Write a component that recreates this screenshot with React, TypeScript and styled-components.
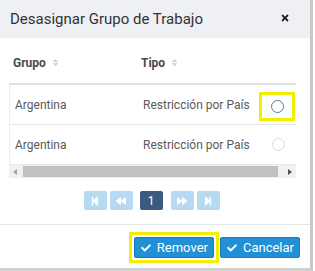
import styled, { createGlobalStyle } from 'styled-components';
import {
    FaTimes,
    FaSort,
    FaCheck,
    FaStepBackward,
    FaBackward,
    FaForward,
    FaStepForward,
} from 'react-icons/fa';

const GlobalStyle = createGlobalStyle`
    body {
        margin: 0;
        background: #ffffff;
        font-family: Roboto, 'Liberation Sans', sans-serif;
        color: #333;
    }
`;

const Modal = styled.div`
    width: 310px;
    height: 268px;
    border-right: 3px solid #c9c9c9;
    border-bottom: 3px solid #d0d0d0;
    background: #fff;
    display: flex;
    flex-direction: column;
`;

const Header = styled.div`
    height: 38px;
    background: #eef0f3;
    display: flex;
    align-items: center;
    justify-content: space-between;
    padding: 0 20px 0 10px;
`;

const Title = styled.h4`
    margin: 0;
    font-size: 15px;
    font-weight: 400;
    color: #333;
`;

const Close = styled.span`
    display: flex;
    color: #1a1a1a;
    margin-top: -3px;
`;

const Body = styled.div`
    padding: 8px 14px 0 9px;
`;

const Row = styled.div<{ $head?: boolean }>`
    display: grid;
    grid-template-columns: 128px 121px 38px;
    height: ${(p) => (p.$head ? '37px' : '39px')};
    align-items: center;
    border-bottom: ${(p) => (p.$head ? '2px solid #e2e2e2' : '1px solid #e8e8e8')};
    border-left: ${(p) => (p.$head ? 'none' : '1px solid #ececec')};
    font-size: 12px;
    color: #5a5a5a;
`;

const HeadCell = styled.div`
    font-weight: 700;
    color: #4a4a4a;
    display: flex;
    align-items: center;
    gap: 5px;
    padding-left: 4px;
    padding-bottom: 4px;
`;

const Cell = styled.div`
    padding-left: 5px;
`;

const RadioCell = styled.div`
    display: flex;
    justify-content: center;
    align-items: center;
`;

const Highlight = styled.span`
    display: inline-flex;
    align-items: center;
    justify-content: center;
    border: 3px solid #f3ef00;
    padding: 2px;
    box-sizing: border-box;
`;

const RadioBox = styled(Highlight)`
    width: 37px;
    height: 29px;
    padding: 0;
    margin-top: 3px;
    margin-right: 2px;
`;

const Radio = styled.span<{ $active?: boolean }>`
    width: 11px;
    height: 11px;
    border-radius: 50%;
    border: 1.5px solid ${(p) => (p.$active ? '#4a7fae' : '#dcdcdc')};
    margin-left: ${(p) => (p.$active ? '0' : '1px')};
`;

const Scrollbar = styled.div`
    height: 13px;
    background: #f1f1f1;
    display: flex;
    align-items: center;
    padding: 0 4px;
    gap: 6px;
`;

const Arrow = styled.span<{ $right?: boolean }>`
    width: 0;
    height: 0;
    border-top: 3px solid transparent;
    border-bottom: 3px solid transparent;
    ${(p) =>
        p.$right
            ? 'border-left: 4px solid #505050;'
            : 'border-right: 4px solid #a3a3a3;'}
`;

const Thumb = styled.div`
    flex: 1;
    height: 11px;
    background: #c1c1c1;
    margin-right: 4px;
`;

const Pager = styled.div`
    display: flex;
    justify-content: center;
    align-items: center;
    margin-top: 13px;
    margin-right: 2px;
`;

const PageBtn = styled.span<{ $active?: boolean; $gap?: number }>`
    width: 23px;
    height: 19px;
    border-radius: 2px;
    display: flex;
    align-items: center;
    justify-content: center;
    background: ${(p) => (p.$active ? '#3b5a80' : '#b6daf2')};
    color: #fff;
    font-size: 12px;
    margin-left: ${(p) => p.$gap ?? 3}px;
`;

const Footer = styled.div`
    margin-top: 14px;
    border-top: 1px solid #e5e5e5;
    display: flex;
    justify-content: flex-end;
    align-items: center;
    padding: 7px 10px 0 0;
    gap: 1px;
`;

const Button = styled.button`
    height: 21px;
    border: 1px solid #1b7cbc;
    border-radius: 2px;
    background: #2190d4;
    color: #fff;
    font-family: Roboto, 'Liberation Sans', sans-serif;
    font-size: 13px;
    display: flex;
    align-items: center;
    gap: 6px;
    padding: 0 5px 0 6px;
    box-sizing: border-box;
`;

export default function App() {
    const rows = ['Argentina', 'Argentina'];
    return (
        <Modal>
            <GlobalStyle />
            <Header>
                <Title>Desasignar Grupo de Trabajo</Title>
                <Close>
                    <FaTimes size={10} />
                </Close>
            </Header>
            <Body>
                <Row $head>
                    <HeadCell>
                        Grupo <FaSort size={9} color="#d4d4d4" />
                    </HeadCell>
                    <HeadCell>
                        Tipo <FaSort size={9} color="#d4d4d4" />
                    </HeadCell>
                    <div />
                </Row>
                {rows.map((r, i) => (
                    <Row key={i}>
                        <Cell>{r}</Cell>
                        <Cell>Restricción por País</Cell>
                        <RadioCell>
                            {i === 0 ? (
                                <RadioBox>
                                    <Radio $active />
                                </RadioBox>
                            ) : (
                                <Radio />
                            )}
                        </RadioCell>
                    </Row>
                ))}
                <Scrollbar>
                    <Arrow />
                    <Thumb />
                    <Arrow $right />
                </Scrollbar>
                <Pager>
                    <PageBtn $gap={0}>
                        <FaStepBackward size={10} />
                    </PageBtn>
                    <PageBtn>
                        <FaBackward size={10} />
                    </PageBtn>
                    <PageBtn $active $gap={7}>
                        1
                    </PageBtn>
                    <PageBtn $gap={8}>
                        <FaForward size={10} />
                    </PageBtn>
                    <PageBtn>
                        <FaStepForward size={10} />
                    </PageBtn>
                </Pager>
            </Body>
            <Footer>
                <Highlight>
                    <Button>
                        <FaCheck size={10} /> Remover
                    </Button>
                </Highlight>
                <Button>
                    <FaCheck size={10} /> Cancelar
                </Button>
            </Footer>
        </Modal>
    );
}
